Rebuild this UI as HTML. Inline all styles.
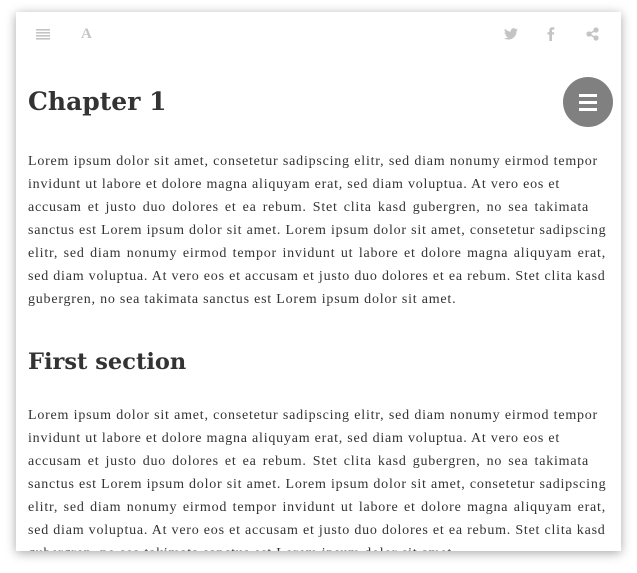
<!DOCTYPE html>
<html><head><style>
body{margin:0;background:#fff;width:637px;height:573px;overflow:hidden;position:relative;font-family:"Liberation Serif",serif;color:#333}
.card{position:absolute;left:16px;top:12px;width:605px;height:539px;background:#fff;box-shadow:0 2px 10px rgba(0,0,0,.35);overflow:hidden}
.ic{position:absolute;color:#bbb}
h1,h2{position:absolute;left:12px;margin:0;font-weight:bold;color:#333;font-family:"DejaVu Serif","Liberation Serif",serif}
.p{position:absolute;left:12px;font-size:14px;letter-spacing:0.78px;line-height:23px}
.p div{white-space:nowrap;text-align:justify;text-align-last:justify;height:23px}
.p div.l{text-align-last:left}
.fab{position:absolute;left:547px;top:65px;width:50px;height:50px;border-radius:50%;background:#808080}
.fab i{position:absolute;left:16px;width:18px;height:3px;background:#fff}
</style></head><body>
<div class="card">
<svg class="ic" style="left:20px;top:16px" width="14" height="12"><g fill="#c4c4c4"><rect y="1" width="14" height="1.6"/><rect y="4" width="14" height="1.6"/><rect y="7" width="14" height="1.6"/><rect y="10" width="14" height="1.6"/></g></svg>
<div class="ic" style="left:65px;top:14px;font-size:15px;font-weight:bold;color:#c4c4c4">A</div>
<svg class="ic" style="left:488px;top:16px" width="14" height="12" viewBox="0 0 24 20"><path fill="#c4c4c4" d="M24 2.4a10 10 0 0 1-2.8.8A5 5 0 0 0 23.3.4a10 10 0 0 1-3.1 1.2A4.9 4.9 0 0 0 11.8 6 14 14 0 0 1 1.7.9a4.9 4.9 0 0 0 1.5 6.6A5 5 0 0 1 1 6.9a4.9 4.9 0 0 0 3.9 4.8 5 5 0 0 1-2.2.1 4.9 4.9 0 0 0 4.6 3.4A9.9 9.9 0 0 1 0 17.3 14 14 0 0 0 7.5 19.5c9 0 14-7.5 14-14v-.6A10 10 0 0 0 24 2.4z"/></svg>
<svg class="ic" style="left:531px;top:15px" width="8" height="14" viewBox="0 0 8 14"><path fill="#c4c4c4" d="M2.3 14V7.5H0.5V5.2H2.3V3.5C2.3 1.5 3.3 0.3 5.5 0.3H7.3V2.6H6C5.1 2.6 5 3 5 3.7V5.2H7.3L7 7.5H5V14Z"/></svg>
<svg class="ic" style="left:570px;top:15px" width="13" height="14" viewBox="0 0 13 14"><g fill="#c4c4c4"><circle cx="10" cy="3" r="2.6"/><circle cx="3" cy="7" r="2.6"/><circle cx="10" cy="11" r="2.6"/></g><path d="M10 3L3 7L10 11" stroke="#c4c4c4" stroke-width="1.5" fill="none"/></svg>
<h1 style="top:75px;font-size:25px">Chapter 1</h1>
<div class="fab"><i style="top:17px"></i><i style="top:24px"></i><i style="top:31px"></i></div>
<div class="p" style="top:138px">
<div style="width:570px">Lorem ipsum dolor sit amet, consetetur sadipscing elitr, sed diam nonumy eirmod tempor</div>
<div style="width:528px">invidunt ut labore et dolore magna aliquyam erat, sed diam voluptua. At vero eos et</div>
<div style="width:561px">accusam et justo duo dolores et ea rebum. Stet clita kasd gubergren, no sea takimata</div>
<div style="width:559px">sanctus est Lorem ipsum dolor sit amet. Lorem ipsum dolor sit amet, consetetur sadipscing</div>
<div style="width:578px">elitr, sed diam nonumy eirmod tempor invidunt ut labore et dolore magna aliquyam erat,</div>
<div style="width:567px">sed diam voluptua. At vero eos et accusam et justo duo dolores et ea rebum. Stet clita kasd</div>
<div class="l">gubergren, no sea takimata sanctus est Lorem ipsum dolor sit amet.</div>
</div>
<h2 style="top:337px;font-size:22.5px">First section</h2>
<div class="p" style="top:392px">
<div style="width:570px">Lorem ipsum dolor sit amet, consetetur sadipscing elitr, sed diam nonumy eirmod tempor</div>
<div style="width:528px">invidunt ut labore et dolore magna aliquyam erat, sed diam voluptua. At vero eos et</div>
<div style="width:561px">accusam et justo duo dolores et ea rebum. Stet clita kasd gubergren, no sea takimata</div>
<div style="width:559px">sanctus est Lorem ipsum dolor sit amet. Lorem ipsum dolor sit amet, consetetur sadipscing</div>
<div style="width:578px">elitr, sed diam nonumy eirmod tempor invidunt ut labore et dolore magna aliquyam erat,</div>
<div style="width:567px">sed diam voluptua. At vero eos et accusam et justo duo dolores et ea rebum. Stet clita kasd</div>
<div class="l">gubergren, no sea takimata sanctus est Lorem ipsum dolor sit amet.</div>
</div>
</div>
</body></html>
